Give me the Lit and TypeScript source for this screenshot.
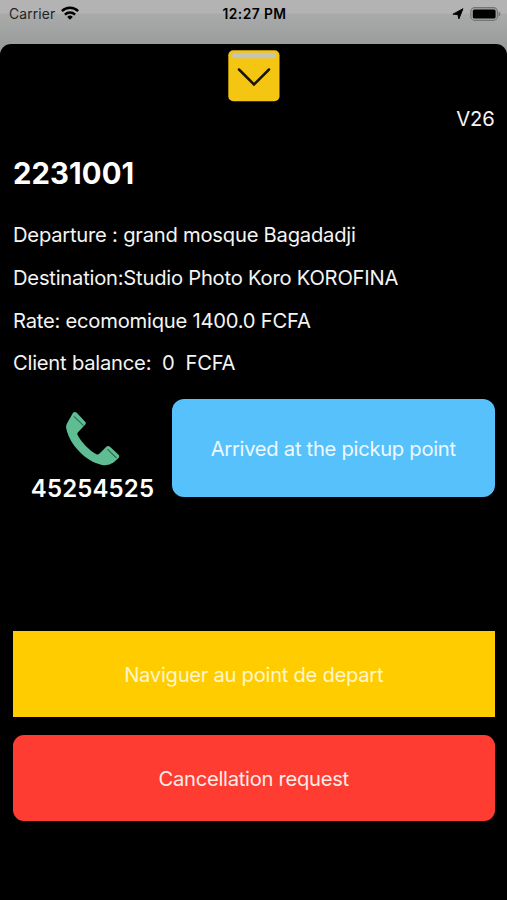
import { LitElement, html, css } from "lit";
import { customElement } from "lit/decorators.js";

@customElement("status-bar")
class StatusBar extends LitElement {
  static styles = css`
    :host {
      display: grid;
      grid-template-columns: 1fr auto 1fr;
      align-items: center;
      height: 27px;
      padding: 0 6px 0 9px;
      font-size: 13px;
      line-height: 27px;
      color: #000;
    }
    .left { display: flex; align-items: center; gap: 6px; color: #242424; }
    .carrier { font-size: 13.8px; letter-spacing: 0.15px; padding-top: 1px; line-height: 26px; }
    .time { font-size: 13.8px; font-weight: 600; letter-spacing: 0.45px; margin-right: 1px; padding-top: 1px; line-height: 26px; }
    .right { display: flex; align-items: center; justify-content: flex-end; gap: 6px; }
    svg { display: block; }
    .wifi { margin-top: -2px; }
  `;
  render() {
    return html`
      <div class="left">
        <span class="carrier">Carrier</span>
        <svg class="wifi" width="18" height="14" viewBox="0 0 18 14" fill="none" stroke="#000" stroke-width="2.4">
          <path d="M0.9 5.2a11.4 11.4 0 0 1 16.2 0" />
          <path d="M3.9 8.6a7.2 7.2 0 0 1 10.2 0" />
          <path d="M9 13.8 6.2 10.9a4 4 0 0 1 5.6 0z" fill="#000" stroke="none" />
        </svg>
      </div>
      <span class="time">12:27 PM</span>
      <div class="right">
        <svg width="12" height="12" viewBox="0 0 12 12"><path d="M11 .7 6.9 10.9 5.8 6.6.9 6.2z" fill="#000" stroke="#000" stroke-width=".9" stroke-linejoin="round" /></svg>
        <svg width="31" height="14" viewBox="0 0 31 14">
          <rect x=".8" y=".6" width="26.6" height="12.8" rx="4" fill="#a5a5a5" stroke="#747474" stroke-width="1.1" />
          <rect x="2.8" y="2.4" width="22.8" height="9.2" rx="1.6" fill="#000" />
          <path d="M28.6 4.4c2.4.8 2.4 4.4 0 5.2z" fill="#747474" />
        </svg>
      </div>
    `;
  }
}

@customElement("app-root")
class AppRoot extends LitElement {
  static styles = css`
    :host {
      display: block;
      height: 900px;
      box-sizing: border-box;
      overflow: hidden;
      background: linear-gradient(#b3b3b3 0 13px, #a9abaa 14px, #9b9d9c 44px);
      font-family: Inter, "Liberation Sans", sans-serif;
      font-size: 20.2px;
      color: #f4f4f4;
    }
    .sheet {
      box-sizing: border-box;
      height: 856px;
      margin-top: 17px;
      padding: 6px 12.5px 0 13px;
      background: #000;
      border-radius: 11px 11px 0 0;
    }
    svg { display: block; }
    .close { display: block; width: 52px; height: 52px; margin: 0 auto; }
    .version { height: 34px; line-height: 34px; text-align: right; letter-spacing: -0.2px; }
    h1 { margin: 14px 0 16px; font-size: 29.3px; line-height: 48px; height: 48px; font-weight: 700; letter-spacing: 0.1px; color: #fff; }
    .details { margin: 0; padding: 0; list-style: none; letter-spacing: -0.23px; }
    .details li { height: 42.75px; line-height: 42.75px; white-space: pre; }
    .actions { display: flex; height: 98px; margin-top: 14px; }
    .call { width: 159px; display: flex; flex-direction: column; align-items: center; }
    .call svg { margin-top: 13px; flex: none; }
    .number { font-size: 24px; line-height: 32px; margin-top: 7px; font-weight: 600; letter-spacing: 0.15px; color: #fff; white-space: nowrap; }
    .button {
      display: flex;
      align-items: center;
      justify-content: center;
      box-sizing: border-box;
      height: 86px;
      line-height: 24px;
      padding-top: 1px;
      border-radius: 11px;
      letter-spacing: -0.28px;
      white-space: nowrap;
    }
    .arrived { flex: 1; height: 98px; background: #57c1fc; color: #edf9ff; border-radius: 12px; }
    .navigate { margin-top: 134px; background: #ffcc00; color: #fff6ca; border-radius: 0; }
    .cancel { margin-top: 18px; background: #ff3c31; color: #ffebe9; }
  `;
  render() {
    return html`
      <status-bar></status-bar>
      <main class="sheet">
        <svg class="close" viewBox="0 0 52 52">
          <rect x=".3" y=".2" width="51.2" height="51" rx="5" fill="#f4c511" />
          <rect x="4" y="2.7" width="44" height="5.6" rx="2.5" fill="#c5c5b7" />
          <path d="M11 19.5 26 34.5 41 19.5" fill="none" stroke="#19150b" stroke-width="2.5" stroke-linecap="round" />
        </svg>
        <div class="version">V26</div>
        <h1>2231001</h1>
        <ul class="details">
          <li>Departure : grand mosque Bagadadji</li>
          <li>Destination:Studio Photo Koro KOROFINA</li>
          <li>Rate: ecomomique 1400.0 FCFA</li>
          <li>Client balance:  0  FCFA</li>
        </ul>
        <div class="actions">
          <div class="call">
            <svg width="54" height="54" viewBox="0 0 54 54">
              <path d="M7 .8Q9-.6 11 .9L19.4 10Q20.2 11.2 19.3 12.4L11.8 20.6Q11 21.8 11.6 23C15.5 30.2 22.5 37.8 30.4 42.3Q32 43 33.3 41.8L40.6 34.6Q42.3 33.4 44 34.8L52.8 43Q53.8 44.5 52.6 46L47.5 50.6Q42 54.2 36 52.9C19.5 49.5 4 32.5 .5 17.5C-.3 14.5 .2 13 1.5 10.5Z" fill="#5fbd94" />
              <path d="M8 4.4 17.5 13.6M41.4 37.2 50.5 46" stroke="#286e50" stroke-width="1.1" />
            </svg>
            <span class="number">45254525</span>
          </div>
          <div class="button arrived">Arrived at the pickup point</div>
        </div>
        <div class="button navigate">Naviguer au point de depart</div>
        <div class="button cancel">Cancellation request</div>
      </main>
    `;
  }
}
